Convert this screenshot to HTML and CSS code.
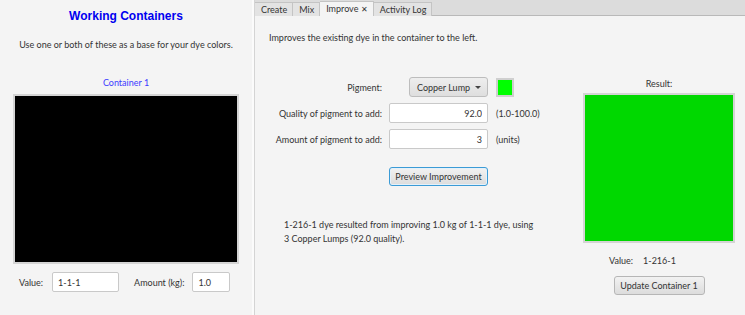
FILE: index.html
```html
<!DOCTYPE html>
<html lang="en">
<head>
  <meta charset="UTF-8">
  <title>Dye Mixer</title>
  <link rel="stylesheet" href="styles.css">
</head>
<body>
  <div class="app">
    <div class="left">
      <h1>Working Containers</h1>
      <p class="hint">Use one or both of these as a base for your dye colors.</p>
      <div class="container-label">Container 1</div>
      <div class="swatch-big black"></div>
      <div class="value-row">
        <span>Value:</span>
        <input class="field value-field" type="text" value="1-1-1">
        <span class="amount-label">Amount (kg):</span>
        <input class="field amount-field" type="text" value="1.0">
      </div>
    </div>

    <div class="right">
      <div class="tabs">
        <div class="tab">Create</div>
        <div class="tab">Mix</div>
        <div class="tab selected">Improve <span class="close">✕</span></div>
        <div class="tab">Activity Log</div>
      </div>

      <div class="content">
        <p class="desc">Improves the existing dye in the container to the left.</p>

        <div class="work">
          <div class="form-area">
            <div class="form">
              <label>Pigment:</label>
              <div class="pigment-ctl">
                <div class="combo">Copper Lump <span class="arrow"></span></div>
                <div class="chip"></div>
              </div>

              <label>Quality of pigment to add:</label>
              <input class="field num" type="text" value="92.0">
              <span class="unit">(1.0-100.0)</span>

              <label>Amount of pigment to add:</label>
              <input class="field num" type="text" value="3">
              <span class="unit">(units)</span>

              <span></span>
              <button class="btn focused">Preview Improvement</button>
            </div>

            <p class="result-text">1-216-1 dye resulted from improving 1.0 kg of 1-1-1 dye, using<br>3 Copper Lumps (92.0 quality).</p>
          </div>

          <div class="result">
            <div class="result-label">Result:</div>
            <div class="swatch-big green"></div>
            <div class="result-value"><span>Value:</span><span>1-216-1</span></div>
            <button class="btn">Update Container 1</button>
          </div>
        </div>
      </div>
    </div>
  </div>
</body>
</html>
```
FILE: styles.css
```css
body {
  margin: 0;
  background: #f4f4f4;
  font-family: Lato, "Open Sans", sans-serif;
  font-size: 9px;
  color: #333;
}
.app {
  display: flex;
  height: 315px;
}

/* left panel */
.left {
  width: 252px;
  border-right: 2px solid #fbfbfb;
  display: flex;
  flex-direction: column;
  align-items: center;
}
h1 {
  font-family: "Liberation Sans", Arial, sans-serif;
  font-size: 12px;
  line-height: 14px;
  color: #0000f0;
  margin: 9px 0 0;
}
.hint {
  margin: 16px 0 0;
  line-height: 12px;
}
.container-label {
  margin-top: 26px;
  line-height: 12px;
  color: #3c3cff;
}
.swatch-big {
  border: 2px solid #d4d4d4;
  box-sizing: border-box;
}
.left .swatch-big {
  width: 226px;
  height: 170px;
  margin-top: 5px;
  margin-left: -1px;
}
.black { background: #000; }
.green { background: #00d800; }
.value-row {
  display: flex;
  align-items: center;
  align-self: flex-start;
  margin: 8px 0 0 19px;
}
.field {
  font: inherit;
  color: #333;
  height: 20px;
  box-sizing: border-box;
  border: 1px solid #c9c9c9;
  border-radius: 2px;
  background: #fff;
  padding: 0 5px;
  margin: 0;
  outline: none;
}
.value-field { width: 67px; margin-left: 9px; }
.amount-label { margin-left: 15px; }
.amount-field { width: 38px; margin-left: 8px; }

/* right panel */
.right {
  flex: 1;
  border-left: 1px solid #d4d4d4;
  display: flex;
  flex-direction: column;
}
.tabs {
  height: 15px;
  background: #dcdcdc;
  border-bottom: 1px solid #b9b9b9;
  display: flex;
  align-items: flex-end;
}
.tab {
  height: 14px;
  line-height: 14px;
  padding: 0 5px 0 6px;
  background: #e3e3e3;
  border: 1px solid #c4c4c4;
  border-bottom: none;
  border-left: none;
  box-sizing: border-box;
  margin-bottom: -1px;
}
.tab.selected {
  background: #f4f4f4;
  height: 15px;
}
.close { font-size: 8px; }
.content {
  padding: 16px 0 0 14px;
}
.desc {
  margin: 0;
  line-height: 12px;
}
.work {
  display: flex;
  margin-top: 33px;
}
.form-area {
  width: 300px;
}
.form {
  display: grid;
  grid-template-columns: 113px 99px auto;
  column-gap: 7px;
  row-gap: 6px;
  align-items: center;
}
.form label { text-align: right; }
.pigment-ctl {
  grid-column: span 2;
  display: flex;
  align-items: center;
  padding-left: 20px;
  height: 20px;
}
.combo {
  width: 79px;
  height: 20px;
  box-sizing: border-box;
  border: 1px solid #bdbdbd;
  border-radius: 3px;
  background: linear-gradient(#eeeeee, #dedede);
  display: flex;
  align-items: center;
  padding-left: 7px;
}
.arrow {
  margin-left: auto;
  margin-right: 6px;
  border-left: 3px solid transparent;
  border-right: 3px solid transparent;
  border-top: 3px solid #444;
}
.chip {
  width: 18px;
  height: 19px;
  margin-left: 8px;
  box-sizing: border-box;
  border: 2px solid #cfcfcf;
  background: #00ff00;
}
.num { text-align: right; }
.unit { margin-left: 1px; }
.btn {
  font: inherit;
  color: #333;
  height: 19px;
  padding: 0 6px;
  white-space: nowrap;
  border: 1px solid #b6b6b6;
  border-radius: 3px;
  background: linear-gradient(#f2f2f2, #dcdcdc);
}
.form .btn {
  margin-top: 12px;
  width: 99px;
  padding: 0;
}
.btn.focused {
  border-color: #3b9bd6;
  box-shadow: inset 0 0 0 1px #e4f1fa;
}
.result-text {
  margin: 32px 0 0 15px;
  line-height: 14px;
}
.result {
  width: 152px;
  margin-left: auto;
  margin-right: 10px;
  display: flex;
  flex-direction: column;
  align-items: center;
}
.result-label {
  margin-top: 1px;
  line-height: 12px;
}
.result .swatch-big {
  width: 152px;
  height: 150px;
  margin-top: 3px;
}
.result-value {
  margin-top: 12px;
  line-height: 12px;
  display: flex;
  gap: 10px;
  align-self: flex-start;
  margin-left: 26px;
}
.result .btn {
  margin-top: 9px;
  width: 91px;
  padding: 0;
}
```
